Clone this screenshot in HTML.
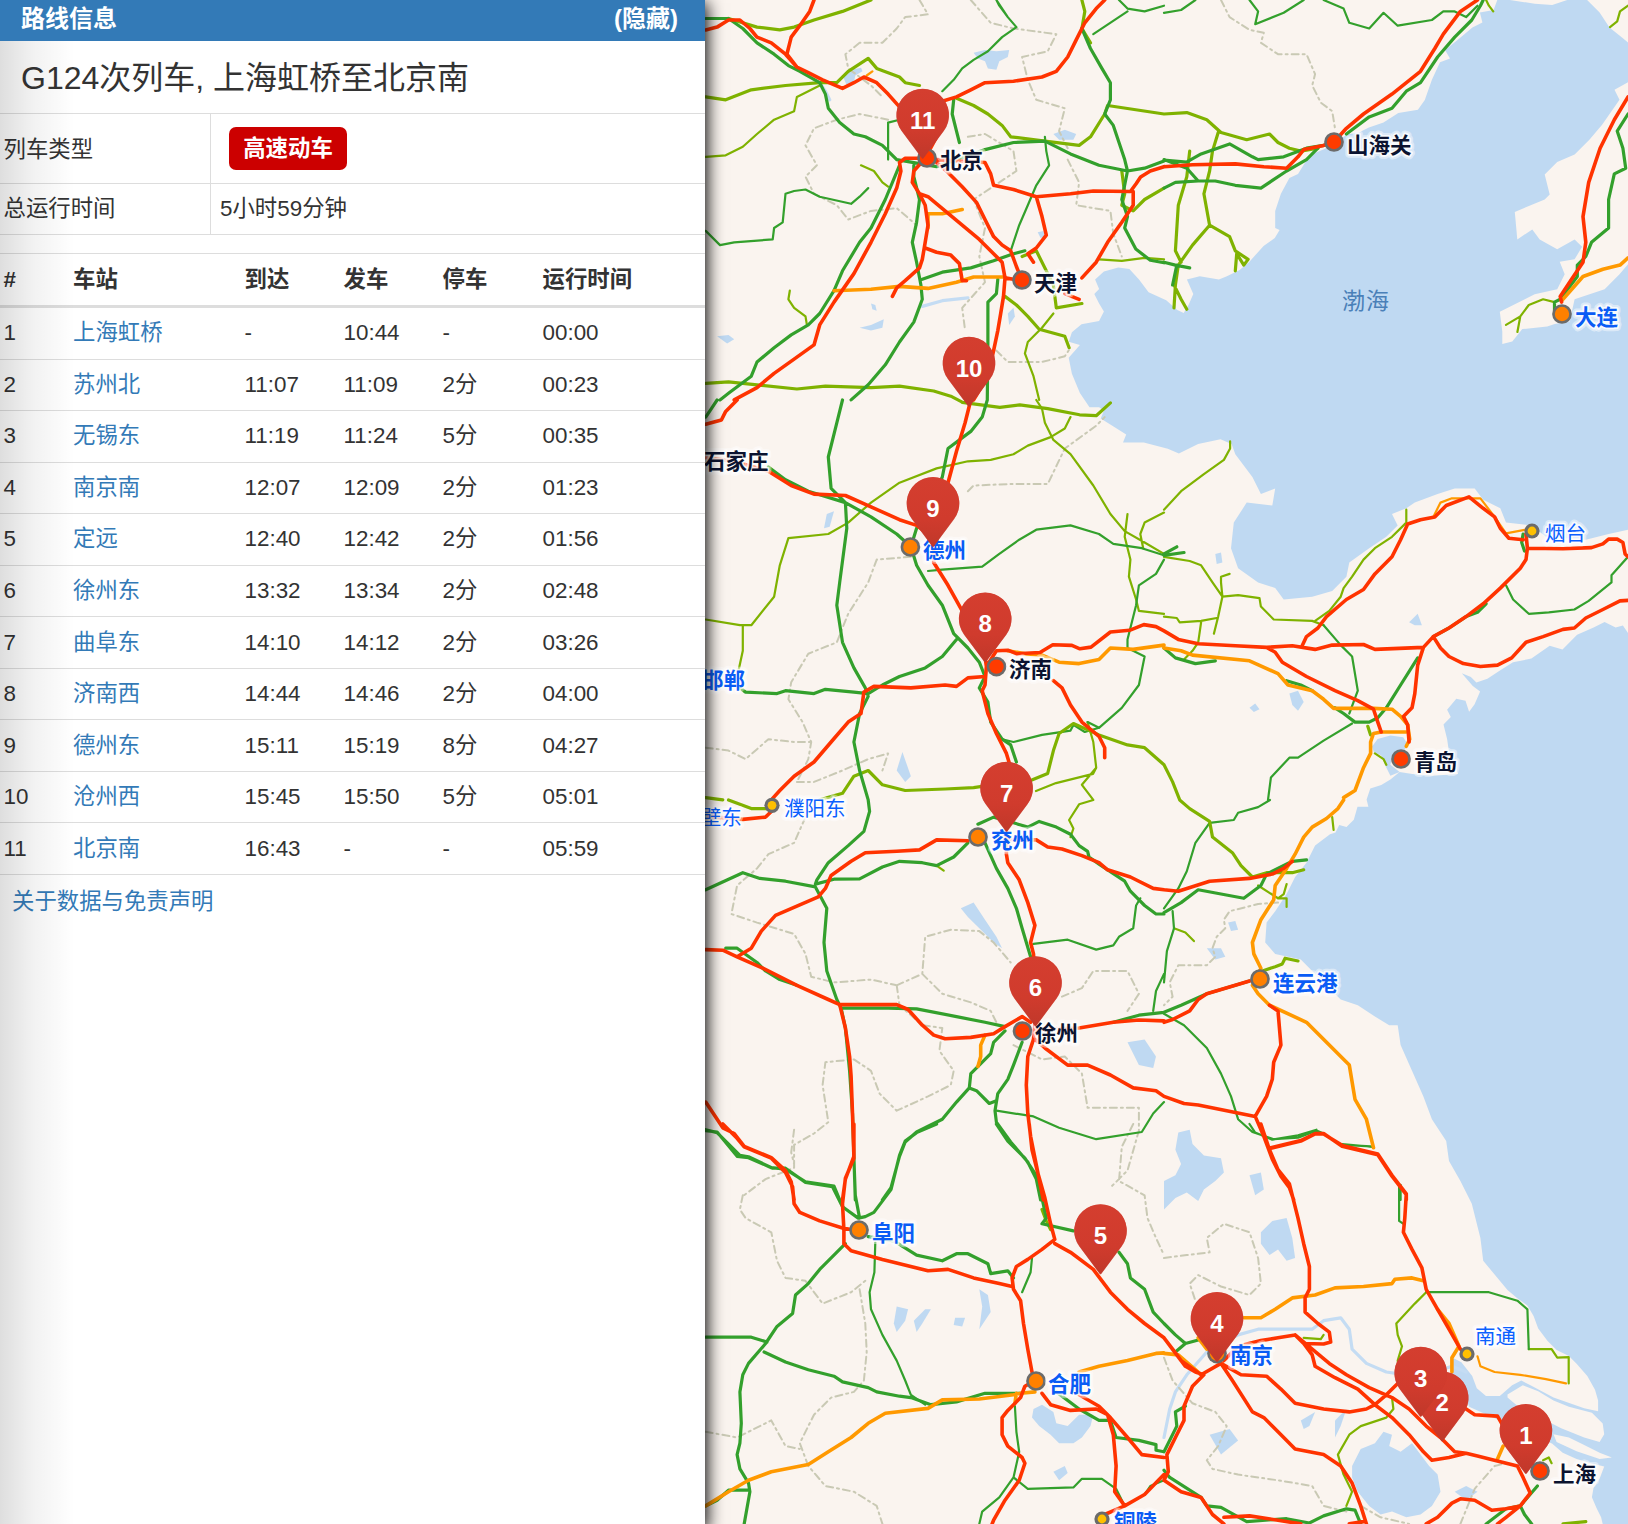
<!DOCTYPE html>
<html lang="zh-CN">
<head>
<meta charset="utf-8">
<title>G124次列车, 上海虹桥至北京南</title>
<style>
html,body{margin:0;padding:0;}
body{width:1628px;height:1524px;overflow:hidden;position:relative;background:#faf4ef;
  font-family:"Liberation Sans","Noto Sans CJK SC",sans-serif;color:#333;}
#map{position:absolute;left:0;top:0;width:1628px;height:1524px;}
#map svg{display:block;}
#panel{position:absolute;left:0;top:0;width:705px;height:1524px;background:#fff;
  box-shadow:0 5px 16px 2px #000;overflow:hidden;}
#panel:before{content:"";position:absolute;left:0;top:41px;width:75px;bottom:0;
  background:linear-gradient(to right,rgba(0,0,0,.13),rgba(0,0,0,.05) 45%,rgba(0,0,0,0));pointer-events:none;z-index:3;}
#hdr{position:absolute;left:0;top:0;width:705px;height:41px;background:#337ab7;color:#fff;
  font-weight:bold;font-size:24px;line-height:41px;}
#hdr .t{position:absolute;left:21px;top:-2px;}
#hdr .h{position:absolute;right:27px;top:-2px;}
#title{position:absolute;left:21px;top:54px;font-size:32px;line-height:48px;color:#333;white-space:nowrap;}
.ln{position:absolute;left:0;width:705px;height:1px;background:#ddd;}
.vl{position:absolute;left:210px;top:113px;width:1px;height:121px;background:#ddd;}
.c{position:absolute;font-size:22.4px;line-height:32px;white-space:nowrap;color:#333;}
.badge{position:absolute;left:229px;top:127px;width:118px;height:43px;border-radius:7px;background:#c00;color:#fff;
  font-weight:bold;font-size:22.4px;line-height:43px;text-align:center;}
table{position:absolute;left:0;top:253px;width:705px;border-collapse:collapse;table-layout:fixed;font-size:22.4px;}
th,td{padding:0 0 0 3.5px;text-align:left;white-space:nowrap;height:50.56px;line-height:32px;vertical-align:middle;border-top:1px solid #ddd;}
th{font-weight:bold;height:51px;border-bottom:3px solid #ddd;}
tr:last-child td{border-bottom:1px solid #ddd;}
a{color:#337ab7;text-decoration:none;}
#foot{position:absolute;left:12px;top:885.5px;font-size:22.4px;line-height:32px;}
</style>
</head>
<body>
<div id="map">
<svg width="1628" height="1524" viewBox="0 0 1628 1524">
<rect width="1628" height="1524" fill="#faf4ef"/>
<path d="M1497.3 0.0 L1493.6 10.0 L1479.9 12.5 L1482.4 22.4 L1472.4 27.4 L1457.5 39.9 L1445.0 49.9 L1450.0 58.6 L1440.0 62.3 L1431.9 79.8 L1424.8 100.0 L1417.9 109.7 L1398.3 112.9 L1383.5 122.6 L1368.9 127.4 L1358.9 132.5 L1347.0 134.5 L1335.0 142.5 L1324.5 149.1 L1309.9 155.0 L1304.8 163.0 L1298.0 173.9 L1289.4 178.1 L1280.9 193.8 L1275.2 210.9 L1275.2 228.0 L1279.6 230.0 L1274.8 238.0 L1263.6 246.0 L1249.2 261.9 L1239.6 269.9 L1226.9 276.3 L1218.9 279.5 L1199.7 276.3 L1186.9 279.5 L1193.3 293.9 L1188.5 305.1 L1183.7 313.0 L1177.3 309.9 L1166.2 300.3 L1148.6 292.3 L1139.0 279.5 L1129.4 269.1 L1118.3 267.5 L1103.9 271.5 L1095.1 279.5 L1099.1 289.1 L1094.3 293.9 L1099.1 303.5 L1103.9 311.4 L1099.1 321.0 L1081.5 324.2 L1071.9 332.2 L1068.7 341.8 L1079.9 345.0 L1068.7 357.8 L1071.9 373.7 L1079.9 392.9 L1089.5 407.3 L1099.1 407.3 L1103.9 410.5 L1100.7 418.5 L1113.5 426.4 L1126.2 434.4 L1123.0 442.4 L1143.8 442.4 L1167.8 448.8 L1178.9 453.6 L1198.1 444.0 L1220.5 439.2 L1231.6 444.0 L1235.3 454.2 L1252.4 477.0 L1260.9 494.1 L1275.2 488.4 L1272.3 505.5 L1246.7 502.6 L1233.8 522.6 L1231.0 548.2 L1238.1 568.2 L1258.1 582.4 L1275.2 588.1 L1283.7 599.5 L1312.2 596.7 L1332.2 591.0 L1346.4 576.7 L1349.3 562.5 L1369.2 548.2 L1386.3 536.8 L1397.7 525.4 L1392.0 514.0 L1406.3 508.3 L1414.8 502.6 L1437.6 494.1 L1454.7 488.4 L1474.7 488.4 L1483.2 499.8 L1500.3 508.3 L1506.0 522.6 L1531.7 525.4 L1545.9 536.8 L1585.8 539.7 L1608.6 534.0 L1628.0 529.7 L1628.0 264.3 L1619.5 274.3 L1604.6 289.2 L1589.6 294.2 L1574.6 299.2 L1569.7 321.6 L1554.7 324.1 L1547.2 326.6 L1522.3 329.1 L1512.3 341.6 L1502.3 344.1 L1502.3 331.6 L1499.8 311.7 L1524.8 299.2 L1534.7 294.2 L1557.2 289.2 L1564.7 274.3 L1559.7 261.8 L1574.6 259.3 L1582.1 246.8 L1574.6 239.4 L1557.2 249.3 L1539.7 239.4 L1532.3 229.4 L1517.3 239.4 L1514.8 211.9 L1544.7 199.5 L1549.7 194.5 L1544.7 174.5 L1557.2 162.1 L1574.6 154.6 L1589.6 139.6 L1602.1 124.7 L1619.5 99.7 L1614.5 89.8 L1628.0 82.3 L1628.0 42.4 L1622.0 37.4 L1609.5 27.4 L1599.6 12.5 L1587.1 0.0 L1567.2 0.0 L1552.2 5.0 L1534.7 3.7 L1509.8 0.0Z" fill="#bfd9f2"/>
<path d="M1628.0 632.9 L1622.9 625.6 L1615.6 627.5 L1604.6 622.0 L1593.6 627.5 L1577.1 634.8 L1562.5 649.4 L1549.7 645.8 L1531.4 658.6 L1513.0 662.2 L1498.4 671.4 L1487.4 678.7 L1476.4 682.4 L1470.9 676.9 L1461.8 673.2 L1472.8 686.0 L1480.1 691.5 L1474.6 704.3 L1469.1 711.7 L1465.5 700.7 L1456.3 698.8 L1447.1 709.8 L1450.8 717.1 L1443.5 724.5 L1447.1 739.1 L1449.0 751.9 L1458.1 773.9 L1432.5 775.7 L1412.4 773.9 L1399.6 772.1 L1390.4 779.4 L1381.3 784.9 L1370.3 788.5 L1366.6 799.5 L1368.4 806.8 L1357.5 806.8 L1353.8 819.7 L1346.5 827.0 L1339.2 825.1 L1335.5 832.5 L1330.0 834.3 L1315.1 845.6 L1306.5 862.7 L1295.1 877.0 L1286.6 894.1 L1275.2 911.2 L1266.6 922.6 L1265.2 942.5 L1275.2 953.9 L1300.8 959.6 L1323.6 982.4 L1340.7 999.5 L1357.8 1005.2 L1374.9 1016.6 L1389.2 1025.2 L1397.7 1025.2 L1400.6 1045.1 L1412.0 1070.8 L1423.4 1096.4 L1431.9 1119.2 L1446.2 1141.1 L1449.0 1161.1 L1460.4 1181.0 L1471.8 1203.8 L1480.4 1238.0 L1483.2 1260.8 L1507.5 1290.0 L1516.7 1297.7 L1527.4 1305.4 L1533.6 1316.1 L1538.2 1328.4 L1547.4 1340.7 L1556.6 1349.9 L1568.9 1356.0 L1576.6 1363.7 L1587.3 1376.0 L1595.0 1389.8 L1598.1 1400.5 L1598.1 1411.3 L1584.2 1408.2 L1553.5 1397.5 L1530.5 1385.2 L1521.3 1380.6 L1512.1 1385.2 L1499.8 1395.9 L1486.0 1395.9 L1476.8 1388.3 L1472.2 1376.0 L1461.4 1362.2 L1452.2 1357.6 L1450.7 1372.9 L1458.3 1385.2 L1466.0 1397.5 L1469.1 1406.7 L1499.8 1420.5 L1522.8 1431.3 L1552.0 1443.5 L1562.7 1452.7 L1576.6 1458.9 L1591.9 1463.5 L1604.2 1466.6 L1599.6 1478.8 L1593.5 1488.1 L1591.9 1497.3 L1596.5 1508.0 L1601.1 1517.2 L1602.7 1524.0 L1628.0 1524.0Z" fill="#bfd9f2"/>
<path d="M1507.5 1394.4 L1522.8 1385.2 L1538.2 1391.3 L1553.5 1400.5 L1568.9 1406.7 L1591.9 1412.8 L1602.7 1423.6 L1604.2 1434.3 L1599.6 1442.0 L1584.2 1437.4 L1561.2 1428.2 L1545.9 1420.5 L1530.5 1412.8 L1516.7 1405.2 L1507.5 1397.5Z" fill="#faf4ef"/>
<path d="M1553.5 1434.3 L1568.9 1437.4 L1584.2 1445.1 L1599.6 1452.7 L1611.9 1457.4 L1599.6 1458.9 L1576.6 1451.2 L1556.6 1442.0Z" fill="#faf4ef"/>
<path d="M973.6 52.7 L985.0 49.9 L996.4 51.3 L1009.2 49.9 L1007.8 57.0 L999.3 61.3 L996.4 69.8 L987.9 68.4 L985.0 61.3 L977.9 58.4Z" fill="#bfd9f2"/>
<path d="M842.5 75.5 L851.1 69.8 L861.0 67.8 L862.5 71.3 L855.3 75.5 L853.9 82.7 L846.8 85.5Z" fill="#bfd9f2"/>
<path d="M1053.4 134.0 L1064.8 129.7 L1076.2 134.0 L1073.4 139.7 L1059.1 139.7Z" fill="#bfd9f2"/>
<path d="M859.6 327.8 L871.0 324.9 L883.8 319.2 L882.4 327.8 L871.0 330.6Z" fill="#bfd9f2"/>
<path d="M717.1 336.3 L728.5 334.9 L734.2 339.2 L727.1 343.4Z" fill="#bfd9f2"/>
<path d="M1007.8 313.5 L1013.5 307.8 L1014.9 316.4 L1009.2 324.9Z" fill="#bfd9f2"/>
<path d="M871.0 303.5 L875.3 305.0 L876.7 310.7 L872.4 309.2Z" fill="#bfd9f2"/>
<path d="M1037.7 232.3 L1043.4 230.9 L1044.9 236.6 L1040.6 238.0Z" fill="#bfd9f2"/>
<path d="M826.8 514.0 L834.0 511.2 L829.7 526.8 L824.0 528.3Z" fill="#bfd9f2"/>
<path d="M896.7 770.5 L902.4 752.0 L910.9 776.2 L905.2 781.9Z" fill="#bfd9f2"/>
<path d="M1409.1 622.3 L1417.7 613.8 L1421.9 625.2 L1414.8 625.2Z" fill="#bfd9f2"/>
<path d="M1289.4 693.6 L1298.0 690.7 L1303.7 702.1 L1298.0 710.7 L1292.3 705.0Z" fill="#bfd9f2"/>
<path d="M1249.5 707.8 L1255.2 703.5 L1259.5 709.2 L1253.8 712.1Z" fill="#bfd9f2"/>
<path d="M1215.3 553.9 L1221.0 552.5 L1222.4 562.5 L1216.7 563.9Z" fill="#bfd9f2"/>
<path d="M960.8 908.3 L973.6 902.6 L985.0 919.7 L996.4 936.8 L1002.1 948.2 L993.6 942.5 L979.3 928.3 L967.9 916.9Z" fill="#bfd9f2"/>
<path d="M1127.5 1042.3 L1144.6 1039.4 L1156.0 1056.5 L1153.2 1067.9 L1138.9 1065.1Z" fill="#bfd9f2"/>
<path d="M1206.8 948.2 L1221.0 948.2 L1225.3 956.8 L1215.3 959.6Z" fill="#bfd9f2"/>
<path d="M1228.1 922.6 L1235.3 921.1 L1238.1 929.7 L1231.0 931.1Z" fill="#bfd9f2"/>
<path d="M1033.5 1409.0 L1042.0 1404.7 L1053.4 1411.9 L1056.3 1423.3 L1067.7 1426.1 L1079.1 1414.7 L1093.3 1414.7 L1090.5 1426.1 L1081.9 1437.5 L1073.4 1443.2 L1059.1 1443.2 L1050.6 1434.7 L1039.2 1426.1 L1032.0 1417.6Z" fill="#bfd9f2"/>
<path d="M896.7 1306.4 L908.1 1309.3 L905.2 1320.7 L896.7 1332.1 L893.8 1323.5Z" fill="#bfd9f2"/>
<path d="M913.8 1320.7 L925.2 1309.3 L930.9 1309.3 L922.3 1323.5 L916.6 1332.1Z" fill="#bfd9f2"/>
<path d="M955.1 1317.8 L965.1 1317.8 L962.2 1326.4 L953.7 1324.9Z" fill="#bfd9f2"/>
<path d="M979.3 1289.3 L987.9 1295.0 L990.7 1312.1 L979.3 1329.2 L982.2 1306.4Z" fill="#bfd9f2"/>
<path d="M1053.4 1471.7 L1064.8 1466.0 L1067.7 1473.1 L1059.1 1480.3Z" fill="#bfd9f2"/>
<path d="M1352.1 1466.0 L1360.7 1448.9 L1374.9 1443.2 L1383.5 1431.8 L1392.0 1434.7 L1389.2 1446.1 L1400.6 1451.8 L1412.0 1443.2 L1420.5 1454.6 L1429.1 1466.0 L1437.6 1474.6 L1440.5 1491.7 L1431.9 1505.9 L1420.5 1514.5 L1406.3 1517.3 L1392.0 1511.6 L1380.6 1514.5 L1369.2 1505.9 L1357.8 1491.7 L1352.1 1477.4Z" fill="#bfd9f2"/>
<path d="M1178.3 1132.6 L1189.7 1129.7 L1192.5 1144.0 L1203.9 1155.4 L1221.0 1158.2 L1223.9 1172.5 L1215.3 1181.0 L1203.9 1189.6 L1198.2 1201.0 L1186.8 1192.4 L1175.4 1198.1 L1164.0 1209.5 L1164.0 1181.0 L1175.4 1175.3 L1181.1 1163.9 L1175.4 1149.7Z" fill="#bfd9f2"/>
<path d="M1260.9 1232.3 L1272.3 1220.9 L1286.6 1218.1 L1292.3 1238.0 L1295.1 1258.0 L1286.6 1260.8 L1278.0 1249.4 L1269.5 1255.1 L1260.9 1243.7Z" fill="#bfd9f2"/>
<path d="M1249.5 1175.3 L1260.9 1172.5 L1263.8 1189.6 L1255.2 1195.3Z" fill="#bfd9f2"/>
<path d="M1209.6 1434.7 L1229.6 1429.0 L1238.1 1440.4 L1221.0 1454.6Z" fill="#bfd9f2"/>
<path d="M1300.8 1420.4 L1315.1 1411.9 L1309.4 1426.1 L1303.7 1429.0Z" fill="#bfd9f2"/>
<path d="M1335.0 1420.4 L1346.4 1409.0 L1340.7 1426.1 L1335.0 1437.5Z" fill="#bfd9f2"/>
<path d="M1454.7 1491.7 L1466.1 1486.0 L1477.5 1491.7 L1466.1 1500.2Z" fill="#bfd9f2"/>
<path d="M1372.1 746.4 L1377.6 739.1 L1390.4 735.5 L1403.2 737.3 L1407.8 744.6 L1403.2 751.9 L1392.2 755.6 L1390.4 764.7 L1399.6 772.1 L1390.4 775.7 L1384.9 764.7 L1381.3 755.6 L1373.9 751.9Z" fill="#bfd9f2"/>
<path d="M819.7 82.7 L825.4 91.2 L829.7 99.8 M922.3 306.4 L942.3 300.7 L967.9 297.8 M1164.0 1437.5 L1169.7 1409.0 L1175.4 1391.9 L1186.8 1374.8 L1206.8 1352.0 L1238.1 1334.9 L1258.1 1329.2 L1283.7 1329.2 L1312.2 1329.2 L1323.6 1320.7 L1340.7 1317.8 L1349.3 1329.2 L1352.1 1349.2 L1366.4 1363.4 L1386.3 1372.0 L1406.3 1374.8 L1434.8 1372.0 L1451.9 1366.3 L1466.1 1372.0" fill="none" stroke="#c4dcf3" stroke-width="3.2" stroke-linejoin="round" stroke-linecap="round"/>
<path d="M859.6 42.8 L845.4 54.2 L848.2 68.4 L859.6 77.0 L871.0 85.5 L882.4 96.9 M919.5 0.0 L928.0 14.3 L905.2 17.1 L896.7 28.5 L882.4 42.8 L859.6 42.8 M888.1 119.7 L859.6 114.0 L836.8 119.7 L814.0 128.3 L805.5 145.4 L816.9 165.3 L805.5 176.7 L814.0 193.8 L836.8 205.2 L848.2 219.5 L871.0 210.9 L896.7 208.1 L916.6 225.2 M970.8 0.0 L990.7 22.8 L1013.5 28.5 L1056.3 34.2 L1047.7 51.3 L1022.1 57.0 L1027.8 79.8 L1036.3 99.8 L1064.8 108.3 L1059.1 131.1 L1067.7 148.2 M967.9 136.8 L985.0 134.0 L1013.5 151.1 L1016.4 171.0 L990.7 188.1 L973.6 199.5 L985.0 228.0 L979.3 256.5 L985.0 282.2 L962.2 307.8 L965.1 330.6 M1067.7 159.6 L1079.1 182.4 L1076.2 205.2 L1110.4 210.9 L1113.3 233.7 L1121.8 256.5 M996.4 350.6 L1007.8 362.0 L1042.0 362.0 L1064.8 356.3 L1070.5 347.7 M1221.0 0.0 L1229.6 17.1 L1249.5 29.9 L1263.8 32.8 L1260.9 42.8 L1278.0 54.2 L1306.5 54.2 L1315.1 74.1 L1312.2 85.5 L1320.8 102.6 L1332.2 111.2 L1335.0 128.3 M967.9 491.2 L973.6 485.5 L1007.8 484.1 L1047.7 484.1 L1064.8 448.5 L1096.2 425.7 L1104.7 417.1 M910.9 556.8 L876.7 559.6 L868.2 582.4 L848.2 613.8 L836.8 642.3 L808.3 653.7 L791.2 682.2 L788.4 699.3 L802.6 722.1 L811.2 742.0 L808.3 759.1 L796.9 781.9 M705.7 747.7 L728.5 750.6 L745.6 759.1 L768.4 739.2 L794.1 742.0 L811.2 742.0 M796.9 781.9 L814.0 781.9 L842.5 770.5 L868.2 759.1 L888.1 753.4 L882.4 770.5 M805.5 817.1 L794.1 842.8 L768.4 854.2 L757.0 868.4 L737.1 885.5 L731.4 914.0 L757.0 922.6 L794.1 934.0 L805.5 953.9 L811.2 976.7 L834.0 982.4 L871.0 979.6 L896.7 985.3 M896.7 985.3 L922.3 973.9 L925.2 936.8 L950.8 929.7 L979.3 931.1 L993.6 942.5 L1010.7 962.5 M896.7 985.3 L899.5 1005.2 L922.3 1025.2 L942.3 1028.0 L939.4 1050.8 L953.7 1070.8 L950.8 1085.0 L928.0 1096.4 L896.7 1110.7 L879.6 1093.6 L871.0 1070.8 L853.9 1059.4 L825.4 1062.2 L822.6 1085.0 L828.3 1122.1 L814.0 1133.5 L794.1 1144.9 L794.1 1167.7 L765.6 1179.1 L742.8 1196.2 M922.3 973.9 L942.3 993.8 L970.8 1002.4 L990.7 1010.9 L996.4 1022.3 M1062.0 996.7 L1081.9 988.1 L1093.3 971.0 L1127.5 971.0 L1138.9 993.8 L1127.5 1010.9 M1013.5 1045.1 L1042.0 1059.4 L1064.8 1056.5 L1081.9 1073.6 L1087.6 1107.8 L1138.9 1107.8 L1138.9 1130.6 L1127.5 1170.5 L1110.4 1187.6 M1278.0 902.6 L1258.1 904.0 L1229.6 911.2 L1223.9 919.7 L1225.3 928.3 L1216.7 936.8 L1212.5 948.2 L1215.3 956.8 L1206.8 965.3 L1178.3 965.3 L1169.7 982.4 L1172.6 996.7 L1164.0 1005.2 M742.8 1195.3 L739.9 1209.5 L745.6 1218.1 L771.3 1232.3 L777.0 1260.8 L785.5 1277.9 L805.5 1280.8 L822.6 1303.6 L851.1 1292.2 L865.3 1280.8 M859.6 1289.3 L865.3 1323.5 L866.7 1352.0 L863.9 1380.5 L853.9 1391.9 L831.1 1397.6 L814.0 1414.7 L799.8 1443.2 L808.3 1466.0 L825.4 1486.0 L853.9 1491.7 L876.7 1505.9 L882.4 1523.9 M705.7 1431.8 L737.1 1437.5 L771.3 1420.4 L785.5 1446.1 L799.8 1448.9 M794.1 1129.7 L791.2 1152.5 L794.1 1163.9 M1133.2 1124.0 L1121.8 1146.8 L1119.0 1181.0 L1144.6 1195.3 L1147.5 1218.1 L1156.0 1238.0 L1164.0 1255.1 M1164.0 1258.0 L1186.8 1255.1 L1209.6 1252.3 L1206.8 1238.0 L1223.9 1223.8 L1249.5 1232.3 L1258.1 1258.0 L1260.9 1283.6 L1249.5 1295.0 L1221.0 1286.5 L1198.2 1275.1 L1189.7 1283.6 L1195.4 1300.7 M1164.0 1357.7 L1172.6 1380.5 L1192.5 1403.3 L1215.3 1411.9 L1226.7 1426.1 L1218.2 1446.1 L1206.8 1460.3 L1212.5 1468.9 L1238.1 1474.6 L1278.0 1480.3 L1312.2 1486.0 L1323.6 1505.9 L1346.4 1511.6 M1360.7 1505.9 L1380.6 1517.3 L1409.1 1523.9 M1460.4 1523.9 L1474.7 1488.8 L1494.6 1466.0 L1506.0 1463.2" fill="none" stroke="#c9c9b4" stroke-width="2" stroke-linejoin="round" stroke-linecap="round" stroke-dasharray="7 4 2 4"/>
<path d="M705.7 156.8 L725.7 155.3 L742.8 146.8 L757.0 134.0 L774.1 119.7 L794.1 111.2 L796.9 96.9 L819.7 85.5 M1164.0 259.4 L1144.6 257.9 L1121.8 260.8 L1099.0 259.4 M1053.4 313.5 L1042.0 327.8 L1027.8 342.0 L1024.9 353.4 L1033.5 376.2 L1039.2 399.9 M789.8 290.7 L788.4 299.3 L794.1 307.8 L805.5 316.4 L806.9 324.9 M861.0 165.3 L873.9 171.0 L882.4 182.4 L888.1 186.7 M1486.1 0.0 L1488.9 5.7 L1493.2 11.4 M1554.5 302.1 L1543.1 299.3 L1528.8 305.0 L1520.3 316.4 L1506.0 324.9 M1520.3 316.4 L1517.4 332.0 M1628.0 5.7 L1620.0 11.4 L1617.2 21.4 L1610.0 27.1 M1036.3 400.0 L1042.0 408.6 L1044.9 422.8 L1053.4 439.9 L1070.5 454.2 L1093.3 485.5 L1110.4 514.0 L1124.7 531.1 L1144.6 542.5 L1164.0 553.9 M1070.5 417.1 L1064.8 428.5 L1050.6 437.1 L1027.8 445.6 L1013.5 454.2 L990.7 459.9 L967.9 461.3 L936.6 468.4 L899.5 482.7 L871.0 502.6 L848.2 522.6 L828.3 534.0 L788.4 538.2 L779.8 565.3 L774.1 596.7 L751.3 625.2 L739.9 625.2 L705.7 619.5 M742.8 625.2 L742.8 650.8 L738.5 670.8 M1127.5 514.0 L1124.7 536.8 L1130.4 559.6 L1128.9 576.7 L1136.1 599.5 L1138.9 610.9 L1164.0 613.8 M1164.0 512.6 L1144.6 522.6 L1140.3 534.0 L1143.2 548.2 M1036.0 791.0 L1056.0 783.1 L1093.0 773.9 L1096.2 767.7 M1087.6 722.1 L1093.3 742.0 L1096.2 767.7 L1081.9 784.8 L1093.3 799.9 M1164.0 509.7 L1181.1 491.2 L1203.9 474.1 L1223.9 459.9 L1230.1 448.5 L1230.1 441.3 M1164.0 556.8 L1189.7 561.0 L1201.1 565.3 L1212.5 582.4 L1222.4 596.7 L1238.1 595.2 L1259.5 598.1 L1260.9 606.6 L1273.7 619.5 L1312.2 620.9 L1323.6 625.2 M1229.6 573.9 L1221.0 576.7 L1221.0 582.4 L1222.4 596.7 L1218.2 616.6 L1213.9 633.7 M1164.0 616.6 L1176.8 618.0 L1179.7 622.3 L1201.1 620.9 L1216.7 618.0 M1201.1 622.3 L1198.2 642.3 L1192.5 650.8 L1184.0 659.4 M1406.3 509.7 L1406.3 522.6 L1392.0 536.8 L1374.9 548.2 L1363.5 559.6 L1352.1 576.7 L1343.6 588.1 L1340.7 596.7 L1329.3 610.9 L1315.1 620.9 M1374.9 753.4 L1383.5 759.1 L1386.3 764.8 M936.6 865.6 L943.7 870.7 M1093.3 800.0 L1079.1 804.3 L1069.1 820.0 L1073.4 828.5 L1070.5 837.1 M1174.0 928.3 L1185.4 932.5 L1193.9 941.1 M1258.1 885.5 L1278.0 898.3 L1286.6 898.3 L1286.6 906.9 M1278.0 898.3 L1283.7 894.1 L1286.6 884.1 M1332.2 817.1 L1333.6 829.9 M1426.2 1292.2 L1414.8 1303.6 L1396.3 1323.5 L1397.7 1334.9 L1402.0 1346.3 L1397.7 1360.6 L1400.6 1380.5 M1528.8 1349.2 L1551.6 1349.2 L1557.3 1357.7 L1568.7 1357.1 L1568.7 1383.4 M1392.0 1397.6 L1393.4 1409.0 L1386.3 1417.6 L1360.7 1426.1 L1349.3 1434.7 L1337.9 1454.6 L1343.6 1474.6 L1352.1 1491.7 L1346.4 1505.9 M1303.7 1337.8 L1320.8 1339.2 L1323.6 1334.9 M1543.1 1460.3 L1548.8 1457.5 L1551.6 1463.2" fill="none" stroke="#7fb200" stroke-width="2.2" stroke-linejoin="round" stroke-linecap="round"/>
<path d="M1044.9 136.8 L1046.3 151.1 L1049.1 165.3 L1036.3 185.3 L1027.8 205.2 L1019.2 225.2 L1010.7 250.8 M942.3 91.2 L953.7 79.8 L962.2 68.4 L973.6 59.9 L987.9 51.3 L1002.1 37.1 L1016.4 27.1 L1007.8 17.1 L999.3 5.7 L996.4 0.0 M888.1 159.6 L888.1 122.6 L899.5 119.7 M705.7 230.9 L720.0 245.1 L734.2 242.3 L772.7 239.4 L774.1 228.0 L782.7 222.3 L785.5 193.8 L794.1 191.0 L805.5 189.5 L819.7 196.7 L851.1 203.8 L859.6 196.7 L868.2 188.1 M996.4 0.0 L1007.8 17.1 L1016.4 27.1 L1002.1 37.1 L987.9 51.3 L973.6 59.9 L962.2 68.4 L953.7 79.8 L942.3 91.2 M1164.0 5.7 L1144.6 11.4 L1127.5 8.6 L1119.0 0.0 M1093.3 34.2 L1127.5 11.4 M1164.0 12.8 L1181.1 10.0 L1195.4 0.0 M1249.5 0.0 L1258.1 11.4 L1255.2 24.2 L1283.7 12.8 L1303.7 0.0 M1323.6 0.0 L1343.6 8.6 L1349.3 22.8 L1369.2 28.5 L1383.5 12.8 L1397.7 25.7 L1431.9 20.0 L1443.3 11.4 L1454.7 11.4 L1466.1 17.1 L1477.5 5.7 M928.0 571.0 L942.3 569.6 L982.2 566.7 L999.3 553.9 L1019.2 539.7 L1036.3 529.7 L1070.5 525.4 L1099.0 534.0 L1113.3 543.9 L1141.8 548.2 L1164.0 555.3 M1164.0 559.6 L1156.0 573.9 L1138.9 585.3 L1136.1 605.2 L1127.5 639.4 L1127.5 648.0 L1144.6 656.5 L1138.9 685.0 L1121.8 707.8 L1099.0 727.8 L1087.6 722.1 M1002.1 739.2 L1013.5 742.0 L1042.0 734.9 L1070.5 730.6 L1073.4 724.9 L1084.8 732.0 L1099.0 727.8 M1352.1 723.5 L1323.6 740.6 L1298.0 757.7 L1289.4 757.7 L1270.9 777.6 L1268.0 799.9 M1323.6 625.2 L1340.7 645.1 L1352.1 656.5 L1357.8 690.7 L1349.3 713.5 M1506.0 585.3 L1513.1 599.5 L1528.8 613.8 L1548.8 612.3 L1574.4 609.5 L1588.7 600.9 L1611.5 582.4 L1611.5 575.3 L1628.0 556.8 M1164.0 973.9 L1156.0 991.0 L1153.2 1010.9 M1033.5 943.9 L1067.7 939.7 L1096.2 949.6 L1113.3 945.4 L1119.0 936.8 L1133.2 928.3 L1136.1 905.5 L1140.3 898.3 M996.4 1110.7 L1033.5 1116.4 L1059.1 1127.8 L1096.2 1139.2 L1141.8 1132.0 L1153.2 1113.5 L1164.0 1102.1 M1270.0 800.0 L1258.1 807.1 L1238.1 812.8 L1233.8 820.0 L1209.6 822.8 L1195.4 842.8 L1186.8 871.3 L1178.3 888.4 L1164.0 908.3 M1172.6 911.2 L1174.0 928.3 L1166.9 951.1 L1164.0 982.4 M1164.0 1013.8 L1184.0 1025.2 L1206.8 1048.0 L1221.0 1073.6 L1231.0 1096.4 L1238.1 1119.2 L1252.4 1132.0 L1273.7 1139.2 L1298.0 1137.7 L1316.5 1130.6 L1323.6 1133.5 M1343.6 1144.9 L1370.6 1146.3 M1400.6 1199.9 L1400.6 1184.8 M875.3 1242.3 L874.4 1272.2 L869.6 1292.2 L871.0 1309.3 L882.4 1334.9 L896.7 1360.6 L905.2 1380.5 L910.9 1394.8 L925.2 1404.7 M1032.0 1258.0 L1030.6 1272.2 L1022.1 1292.2 M1014.9 1406.2 L1016.4 1431.8 L1019.2 1451.8 L1013.5 1477.4 L1027.8 1488.8 L1073.4 1487.4 L1081.9 1478.8 L1101.9 1478.8 L1116.1 1488.8 L1124.7 1505.9 M1013.5 1477.4 L999.3 1497.4 L982.2 1511.6 L979.3 1523.9 M1164.0 1480.3 L1150.3 1486.0 L1144.6 1494.5 M1399.1 1186.7 L1399.1 1220.9 L1403.4 1223.8 M1249.5 1124.0 L1255.2 1132.6 L1272.3 1139.7 L1298.0 1135.4 L1316.5 1129.7 M1342.1 1144.0 L1372.1 1146.8 M1426.2 1292.2 L1488.9 1292.2 L1517.4 1300.7 L1527.4 1309.3 L1528.8 1349.2" fill="none" stroke="#33a02c" stroke-width="2.2" stroke-linejoin="round" stroke-linecap="round"/>
<path d="M866.7 75.5 L872.4 71.3 M1526.0 529.7 L1506.0 533.4 L1494.6 516.9 L1480.4 498.3 L1451.9 498.3 L1440.5 502.6 L1433.3 516.9 M1477.5 1356.3 L1480.4 1366.3 L1494.6 1372.0 L1520.3 1374.8 L1545.9 1379.1 L1565.9 1383.4" fill="none" stroke="#ff9900" stroke-width="2.2" stroke-linejoin="round" stroke-linecap="round"/>
<path d="M705.7 96.9 L725.7 99.8 L751.3 89.8 L785.5 85.5 L819.7 82.7 L836.8 82.7 L848.2 71.3 L868.2 58.4 L876.7 68.4 L899.5 77.0 L905.2 82.7 L919.5 85.5 M728.5 18.5 L757.0 27.1 L779.8 29.9 L794.1 27.1 L814.0 20.0 L842.5 11.4 L871.0 0.0 M705.7 383.3 L728.5 381.9 L757.0 384.8 L796.9 389.0 L825.4 386.2 L871.0 387.6 L899.5 386.2 L933.7 391.0 L950.8 396.2 L962.2 402.2 M956.5 98.3 L973.6 105.5 L987.9 114.0 L1002.1 125.4 L1010.7 136.8 L1044.9 141.1 L1079.1 145.4 L1090.5 136.8 L1104.7 114.0 L1107.6 105.5 L1164.0 114.0 M1005.0 296.4 L1016.4 305.0 L1027.8 316.4 L1039.2 329.2 L1064.8 336.3 L1069.1 347.7 M1081.9 0.0 L1084.8 11.4 L1081.9 28.5 L1090.5 42.8 M1121.8 171.0 L1124.7 193.8 L1121.8 205.2 L1133.2 210.9 L1144.6 199.5 L1164.0 188.1 M1022.1 256.5 L1036.3 250.8 L1053.4 285.0 L1056.3 307.8 L1081.9 303.5 M1164.0 114.0 L1186.8 112.6 L1206.8 119.7 L1221.0 132.5 L1246.7 139.7 L1269.5 134.0 L1278.0 142.5 L1289.4 148.2 L1300.8 151.1 L1317.9 148.2 M1218.2 132.5 L1212.5 151.1 L1209.6 171.0 L1203.9 193.8 L1209.6 225.2 L1229.6 236.6 L1235.3 250.8 L1248.1 259.4 L1243.8 265.1 L1236.7 253.7 L1235.3 270.8 M1209.6 225.2 L1192.5 245.1 L1178.3 265.1 L1175.4 285.0 L1174.0 307.8 M1189.7 151.1 L1186.8 176.7 L1178.3 205.2 L1175.4 250.8 L1181.1 262.2 M1174.0 285.0 L1181.1 299.3 L1186.8 309.2 M962.2 402.3 L999.8 407.4 L1019.8 404.8 L1047.7 408.6 L1079.6 414.8 L1096.2 415.7 L1110.4 402.9 M1164.0 764.8 L1144.6 747.7 L1127.5 744.9 L1099.0 734.9 L1073.4 723.5 L1059.1 733.5 L1053.4 750.6 L1047.7 773.4 L1030.6 780.5 L1002.1 783.3 L973.6 787.6 L945.1 789.0 L905.2 790.5 L882.4 784.8 L868.2 770.5 L853.9 776.2 L842.5 793.3 L819.7 799.9 M705.7 797.6 L722.8 799.9 M1164.0 764.8 L1172.6 781.9 L1179.7 799.9 M1367.8 726.3 L1370.6 734.9 M728.5 800.0 L751.3 808.6 L771.3 808.6 M1179.7 800.0 L1189.7 808.6 L1209.6 821.4 L1212.5 837.1 L1232.4 852.7 L1241.0 865.6 L1252.4 877.0 L1266.6 872.7 M1266.6 872.7 L1292.3 872.7 L1303.7 869.8 M1262.3 971.0 L1275.2 966.7 L1282.3 963.9 L1285.1 958.2 L1298.0 961.0 M1042.0 1209.5 L1046.3 1220.9 L1050.6 1229.5 M1563.0 1523.9 L1585.8 1521.6" fill="none" stroke="#7fb200" stroke-width="3.2" stroke-linejoin="round" stroke-linecap="round"/>
<path d="M705.7 18.5 L728.5 18.5 L742.8 28.5 L757.0 42.8 L774.1 54.2 L788.4 65.6 L799.8 71.3 L819.7 82.7 L825.4 94.1 L828.3 108.3 L839.7 122.6 L853.9 134.0 L865.3 136.8 L882.4 145.4 L896.7 159.6 M899.5 165.3 L885.3 199.5 L871.0 228.0 L859.6 242.3 L842.5 270.8 L834.0 290.7 L819.7 313.5 L808.3 324.9 L791.2 334.9 L774.1 347.7 L757.0 362.0 L751.3 376.2 L728.5 393.3 L720.0 399.9 M913.8 165.3 L913.8 176.7 L919.5 199.5 L916.6 222.3 L912.3 242.3 L916.6 262.2 L920.9 285.0 L922.3 299.3 L913.8 322.1 L899.5 342.0 L885.3 364.8 L868.2 384.8 L851.1 399.9 M922.3 279.3 L942.3 272.2 L970.8 267.9 L993.6 260.8 L1013.5 253.7 L1024.9 250.8 M985.0 149.6 L1013.5 142.5 L1044.9 141.1 L1070.5 153.9 L1099.0 165.3 L1127.5 171.0 L1144.6 168.2 L1164.0 161.0 M953.7 99.8 L952.2 114.0 L956.5 131.1 L959.4 142.5 M1081.9 28.5 L1090.5 48.5 L1101.9 68.4 L1110.4 82.7 L1110.4 99.8 L1104.7 114.0 L1113.3 125.4 L1119.0 142.5 L1124.7 159.6 L1127.5 171.0 L1121.8 199.5 L1127.5 216.6 L1124.7 228.0 L1135.8 249.1 L1150.3 260.2 L1164.0 262.8 M987.3 399.9 L987.9 342.0 L987.9 302.1 L996.4 293.6 L997.8 279.3 M896.7 159.6 L936.6 166.7 L985.0 149.6 M1334.2 141.7 L1323.6 145.4 L1306.5 148.2 L1283.7 156.8 L1258.1 159.6 L1252.4 156.8 L1229.6 143.9 L1201.1 153.9 L1186.5 162.2 L1164.0 160.2 M1164.0 159.6 L1186.8 168.2 L1198.2 181.0 L1215.3 181.0 L1235.3 185.3 L1260.9 188.1 L1286.6 171.0 L1306.5 159.6 L1317.9 148.2 M1346.4 134.0 L1369.2 116.9 L1392.0 108.3 L1406.3 91.2 L1420.5 82.7 L1437.6 57.0 L1454.7 37.1 L1471.8 20.0 L1480.4 5.7 L1483.2 0.0 M1164.0 188.1 L1175.4 182.4 L1198.2 181.0 M1628.0 114.0 L1617.2 131.1 L1622.9 148.2 L1625.7 168.2 L1614.3 173.9 L1608.6 199.5 L1608.6 228.0 L1591.5 242.3 L1585.8 256.5 L1577.3 265.1 L1577.3 276.5 L1560.2 299.3 L1554.5 302.1 L1554.5 310.7 M1164.0 262.2 L1175.4 265.1 L1189.7 267.9 M1176.8 265.1 L1172.6 285.0 M842.5 400.0 L836.8 422.8 L828.3 457.0 L831.1 488.4 L845.4 502.6 L846.8 528.3 L839.7 582.4 L836.8 605.2 L842.5 642.3 L853.9 667.9 L865.3 687.9 L868.2 696.4 L859.6 713.5 L853.9 742.0 L859.6 770.5 L868.2 799.9 M768.4 467.0 L785.5 479.8 L808.3 491.2 L845.4 502.6 L871.0 516.9 L896.7 534.0 L910.9 546.8 L916.6 565.3 L928.0 585.3 L942.3 605.2 L953.7 633.7 L967.9 648.0 L979.3 662.2 L985.0 676.5 L979.3 687.9 L987.9 702.1 L990.7 722.1 L1002.1 739.2 L1010.7 744.9 L1016.4 762.0 M987.3 400.0 L982.2 417.1 L970.8 431.4 L948.0 448.5 L942.3 477.0 L928.0 508.3 L916.6 528.3 L910.9 546.8 M956.5 639.4 L942.3 656.5 L925.2 667.9 L899.5 676.5 L882.4 685.0 L868.2 693.6 L853.9 692.1 L825.4 689.3 L814.0 693.6 L785.5 690.7 L777.0 693.6 L745.6 692.1 L739.9 687.9 M705.7 417.1 L711.4 408.6 L717.1 400.0 M1417.7 657.9 L1400.6 685.0 L1386.3 707.8 L1377.8 717.8 L1369.2 722.1 L1355.0 722.1 L1343.6 713.5 L1335.0 707.8 M1164.0 648.0 L1175.4 657.9 L1195.4 663.6 L1215.3 660.8 M1164.0 553.9 L1176.8 546.8 M1164.0 555.3 L1184.0 552.5 M1286.6 680.7 L1300.8 685.0 L1312.2 690.7 M1433.3 636.6 L1449.0 628.0 L1466.1 616.6 L1477.5 612.3 L1486.1 603.8 M1523.1 534.0 L1521.7 542.5 L1524.5 551.1 M868.2 800.0 L869.6 811.4 L863.9 831.4 L848.2 845.6 L828.3 862.7 L816.9 879.8 L815.4 884.1 M705.7 889.8 L742.8 872.7 L759.9 878.4 L785.5 881.2 L815.4 886.9 L826.8 908.3 L824.0 942.5 L826.8 971.0 L836.8 999.5 L841.1 1008.1 M815.4 884.1 L834.0 879.2 L859.6 878.9 L882.4 867.0 L899.5 861.3 L922.3 862.7 L936.6 865.6 L953.7 857.0 L967.9 842.8 M841.1 1008.1 L888.1 1008.1 L916.6 1008.9 L956.5 1016.6 L985.0 1022.3 L1005.0 1026.6 M977.9 824.2 L993.6 817.1 L1013.5 822.8 L1027.8 827.1 L1039.2 821.4 L1056.3 827.1 L1070.5 834.2 L1079.1 845.6 L1087.6 851.3 L1089.0 857.0 L1099.0 864.1 L1124.7 881.2 L1130.4 891.2 L1144.6 905.5 L1156.0 914.0 L1164.0 914.0 M985.0 842.8 L996.4 868.4 L1007.8 888.4 L1016.4 908.3 L1022.1 928.3 L1030.6 956.8 M725.7 948.2 L737.1 948.2 L757.0 962.5 L765.6 971.0 L779.8 979.6 L796.9 985.3 M1022.1 1042.3 L1013.5 1065.1 L1007.8 1079.3 L997.8 1093.6 L995.0 1110.7 L996.4 1122.1 L1010.7 1142.0 L1027.8 1162.0 L1036.3 1179.1 L1040.6 1199.9 M1005.0 1030.9 L993.6 1042.3 L990.7 1053.7 L985.0 1059.4 L970.8 1073.6 L969.3 1087.9 L956.5 1102.1 L942.3 1119.2 L916.6 1132.0 L905.2 1142.0 L899.5 1156.3 L891.0 1187.6 L882.4 1199.9 M969.3 1087.9 L976.5 1090.7 L989.3 1103.5 L996.4 1100.7 M705.7 1130.6 L717.1 1132.0 L737.1 1156.3 L748.5 1157.7 L771.3 1167.7 L785.5 1169.1 L805.5 1181.9 L834.0 1186.2 L839.7 1199.9 M841.1 1008.1 L845.4 1028.0 L849.6 1070.8 L852.5 1113.5 L853.9 1156.3 L855.3 1199.9 M1164.0 1012.3 L1138.9 1015.2 L1113.3 1022.3 M1164.0 912.6 L1181.1 902.6 L1198.2 889.8 L1243.8 898.3 L1260.9 885.5 L1266.6 874.1 L1292.3 861.3 L1306.5 859.9 M1249.5 981.0 L1206.8 993.8 L1181.1 1005.2 L1164.0 1012.3 M705.7 1129.7 L717.1 1132.6 L739.9 1155.4 L748.5 1156.8 L772.7 1168.2 L785.5 1168.2 L805.5 1182.4 L832.5 1186.7 L842.5 1206.7 L858.2 1218.1 M853.9 1158.2 L855.3 1195.3 L859.6 1218.1 M936.6 1124.0 L916.6 1132.6 L905.2 1141.1 L899.5 1155.4 L891.0 1189.6 L873.9 1212.4 L865.3 1216.6 L858.2 1218.1 M996.4 1124.0 L1007.8 1141.1 L1024.9 1158.2 L1036.3 1175.3 L1042.0 1198.1 L1046.3 1218.1 L1042.0 1223.8 L1073.4 1230.9 M845.4 1243.7 L819.7 1269.4 L808.3 1283.6 L795.5 1295.0 L792.6 1313.5 L777.0 1326.4 L765.6 1343.5 L748.5 1363.4 L742.8 1374.8 L739.9 1391.9 L741.3 1423.3 L739.9 1443.2 L737.1 1454.6 L739.9 1468.9 L748.5 1483.1 L749.9 1491.7 L744.2 1523.9 M705.7 1337.2 L751.3 1337.2 L767.0 1342.0 M764.1 1352.0 L785.5 1362.0 L808.3 1369.7 L834.0 1376.2 L842.5 1381.9 L868.2 1387.6 L876.7 1391.9 L899.5 1396.2 L910.9 1397.6 L930.9 1404.7 M868.2 1236.6 L893.8 1240.9 L916.6 1255.1 L942.3 1260.8 L956.5 1253.7 L967.9 1253.7 L987.9 1263.7 L990.7 1273.6 L1007.8 1270.8 L1013.5 1277.9 M1164.0 1323.5 L1153.2 1312.1 L1144.6 1289.3 L1130.4 1277.9 L1127.5 1263.7 L1119.0 1252.3 M930.9 1404.7 L956.5 1401.9 L985.0 1393.3 L1020.6 1393.3 M1056.3 1391.9 L1079.1 1409.0 L1099.0 1420.4 L1110.4 1420.4 L1116.1 1437.5 L1138.9 1440.4 L1156.0 1444.6 L1156.0 1450.3 L1164.0 1451.8 M705.7 1505.9 L717.1 1500.2 L728.5 1490.2 L748.5 1490.2 M1164.0 1323.5 L1175.4 1334.9 L1185.4 1343.5 L1201.1 1339.2 L1221.0 1340.6 M1185.4 1343.5 L1175.4 1352.0 M1164.0 1451.8 L1176.8 1426.1 L1175.4 1411.9 L1185.4 1406.2 M1164.0 1470.3 L1169.7 1477.4 L1201.1 1497.4 L1206.8 1505.9 L1221.0 1507.3 L1246.7 1521.6 L1286.6 1518.7 L1309.4 1523.0 L1323.6 1515.9 L1346.4 1508.8 L1355.0 1510.2 L1360.7 1523.9 M1486.1 1523.9 L1506.0 1508.8 L1520.3 1505.9 L1537.4 1486.0 M1520.3 1505.9 L1524.5 1514.5 L1531.7 1523.9" fill="none" stroke="#33a02c" stroke-width="3.2" stroke-linejoin="round" stroke-linecap="round"/>
<path d="M834.0 290.7 L871.0 289.3 L899.5 286.4 L928.0 288.4 L956.5 282.2 L973.6 277.0 L1005.0 277.0 M962.2 209.5 L942.3 213.8 L928.0 213.8 L928.0 228.0 M1561.6 300.7 L1583.0 276.5 L1602.9 269.3 L1620.0 265.1 L1628.0 257.9 M1007.8 650.8 L1024.9 653.7 L1042.0 655.1 L1059.1 662.2 L1079.1 663.6 L1099.0 659.4 L1110.4 648.0 L1133.2 649.4 L1164.0 645.1 M1164.0 648.0 L1181.1 650.8 L1192.5 655.1 L1249.5 660.8 L1278.0 673.6 L1288.0 685.0 L1312.2 690.7 L1323.6 699.3 L1333.6 708.4 L1357.8 708.4 L1373.5 708.4 L1392.0 709.2 L1400.6 716.4 L1407.7 724.9 L1409.7 739.2 L1406.3 746.3 M1381.2 732.0 L1406.3 732.0 M1381.2 732.0 L1373.5 733.5 L1370.6 742.0 L1370.6 753.4 L1363.5 767.7 L1355.0 790.5 L1343.6 797.6 M985.0 1035.1 L980.7 1045.1 L980.7 1056.5 L977.9 1066.5 M1343.6 800.0 L1337.9 808.6 L1326.5 818.5 L1312.2 827.1 L1303.7 837.1 L1295.1 854.2 L1286.6 868.4 L1275.2 885.5 L1273.7 899.8 L1260.9 919.7 L1252.4 942.5 L1253.8 953.9 L1260.9 968.2 L1252.4 985.3 L1258.1 993.8 L1269.5 1005.2 L1306.5 1022.3 L1349.3 1065.1 L1355.0 1099.3 L1366.4 1119.2 L1373.5 1147.7 M705.7 1505.9 L728.5 1491.7 L748.5 1480.3 L771.3 1471.7 L808.3 1464.6 L828.3 1451.8 L851.1 1437.5 L868.2 1423.3 L885.3 1413.3 L928.0 1408.4 L942.3 1399.9 L979.3 1399.0 L1013.5 1394.8 L1020.6 1393.3 L1034.9 1391.9 M1079.1 1372.0 L1099.0 1366.3 L1127.5 1360.6 L1156.0 1353.4 L1164.0 1352.9 M1016.4 1393.3 L1014.9 1403.3 M1243.8 1317.8 L1260.9 1317.8 L1275.2 1309.3 L1292.3 1297.9 L1315.1 1295.0 L1335.0 1287.9 L1363.5 1286.5 L1392.0 1283.6 L1394.9 1279.3 L1412.0 1277.9 L1423.4 1280.8 M1164.0 1353.4 L1178.3 1354.9 L1198.2 1372.0 M1198.2 1337.8 L1206.8 1349.2 M1437.6 1309.3 L1449.0 1323.5 L1459.0 1346.3 L1451.9 1357.7 L1451.9 1372.0 M1497.5 1458.9 L1503.2 1446.1" fill="none" stroke="#ff9900" stroke-width="3.6" stroke-linejoin="round" stroke-linecap="round"/>
<path d="M705.7 29.9 L717.1 27.1 L728.5 20.0 L739.9 20.0 L749.9 28.5 L757.0 37.1 L771.3 42.8 L785.5 54.2 L796.9 67.0 L808.3 72.7 L822.6 79.8 L842.5 88.4 L853.9 82.7 L863.9 77.0 L876.7 82.7 L888.1 94.1 L899.5 106.9 L908.1 119.7 L916.6 136.8 L925.2 158.2 M814.0 0.0 L809.7 11.4 L799.8 25.7 L791.2 37.1 L786.9 54.2 L796.9 67.0 M925.2 158.2 L936.6 136.8 L942.3 101.2 L956.5 96.9 L970.8 89.8 L985.0 82.7 L1013.5 81.2 L1042.0 77.0 L1056.3 71.3 L1067.7 57.0 L1076.2 39.9 L1084.8 22.8 L1096.2 8.6 L1104.7 0.0 M925.2 158.2 L905.2 158.2 L899.5 162.5 L900.9 171.0 L896.7 188.1 L885.3 213.8 L871.0 242.3 L853.9 273.6 L834.0 302.1 L819.7 324.9 L814.0 344.9 L794.1 359.1 L774.1 373.4 L757.0 387.6 L734.2 399.9 M925.2 158.2 L913.8 171.0 L912.3 182.4 L919.5 193.8 L925.2 205.2 L928.0 225.2 L925.2 242.3 L922.3 259.4 L919.5 267.9 L905.2 280.7 L896.7 287.9 L892.4 296.4 M925.2 248.0 L936.6 252.2 L950.8 255.1 L959.4 263.6 L962.2 280.7 L966.5 280.7 M919.5 193.8 L928.0 196.7 L945.1 210.9 L962.2 225.2 L979.3 239.4 L993.6 253.7 L1002.1 262.2 L1005.0 277.9 M936.6 162.5 L948.0 172.4 L962.2 186.7 L976.5 202.4 L985.0 219.5 L993.6 236.6 L1002.1 245.1 L1010.7 250.8 L1016.4 266.5 L1022.1 280.7 M936.6 159.6 L985.0 162.5 L990.7 173.9 L993.6 185.3 L1013.5 189.5 L1036.3 196.7 L1042.0 216.6 L1046.3 235.1 L1036.3 248.0 L1027.8 253.7 L1033.5 262.2 M1036.3 196.7 L1070.5 193.8 L1093.3 191.0 L1130.4 191.5 L1136.1 183.8 L1140.6 177.0 L1150.3 171.0 L1164.0 166.7 M1133.2 191.5 L1133.2 205.2 L1121.8 222.3 L1107.6 242.3 L1096.2 262.2 L1081.9 277.9 M1022.1 280.7 L1005.0 277.9 L1003.5 296.4 L1000.7 313.5 L997.8 330.6 L993.6 350.6 L987.9 376.2 L973.6 399.9 M1064.8 293.6 L1079.1 299.3 M1164.0 166.7 L1192.5 164.7 L1235.3 163.9 L1263.8 166.7 L1286.6 168.2 L1298.0 156.8 L1303.7 149.6 L1323.6 145.4 L1334.2 141.7 L1346.4 128.3 L1363.5 114.0 L1392.0 94.1 L1420.5 71.3 L1434.8 48.5 L1443.3 34.2 L1460.4 11.4 L1477.5 0.0 M1628.0 96.9 L1614.3 119.7 L1600.1 148.2 L1588.7 182.4 L1583.0 216.6 L1585.8 242.3 L1583.0 262.2 L1571.6 279.3 L1560.2 296.4 L1561.6 302.1 M970.8 400.0 L965.1 422.8 L956.5 451.3 L948.0 482.7 L939.4 514.0 L933.7 536.8 L933.7 562.5 L948.0 585.3 L962.2 610.9 L973.6 636.6 L985.0 656.5 L986.4 666.5 L985.0 685.0 L982.2 690.7 L987.9 713.5 L996.4 733.5 L1006.4 753.4 L1010.7 767.7 L1013.5 799.9 M700.0 457.0 L734.2 461.3 L768.4 471.3 L791.2 485.5 L814.0 494.1 L845.4 495.5 L871.0 506.9 L899.5 519.7 L916.6 525.4 L928.0 534.0 M705.7 424.2 L721.4 420.0 L725.7 411.4 L737.1 400.0 M985.0 676.5 L967.9 677.9 L956.5 686.4 L945.1 685.0 L910.9 687.9 L873.9 686.4 L863.9 692.1 L861.0 713.5 L848.2 722.1 L831.1 742.0 L814.0 762.0 L794.1 776.2 L779.8 790.5 L771.3 799.9 M996.4 650.8 L1007.8 650.2 L1016.4 653.7 L1040.0 652.5 L1052.8 644.8 L1071.9 645.4 L1079.9 648.8 L1091.0 647.1 L1110.4 632.0 L1129.5 630.3 L1143.8 624.6 L1156.0 626.6 L1164.0 630.9 M986.4 666.5 L996.4 650.8 M1053.4 680.7 L1062.0 687.9 L1070.5 705.0 L1081.9 722.1 L1099.0 736.3 L1104.7 747.7 L1104.7 757.7 M1164.0 630.9 L1178.3 639.4 L1198.2 643.7 L1235.3 645.7 L1266.6 647.4 L1292.3 645.7 L1315.1 649.4 L1332.2 645.1 L1363.5 644.5 L1374.9 649.4 L1423.4 647.4 L1433.3 636.6 L1449.0 628.0 L1466.1 616.6 L1483.2 603.8 L1500.3 588.1 L1520.3 568.2 L1526.0 559.6 L1527.4 548.2 L1526.0 534.0 M1302.2 645.7 L1306.5 636.6 L1317.9 628.0 L1326.5 616.6 L1346.4 599.5 L1363.5 589.5 L1374.9 573.9 L1392.0 556.8 L1400.6 539.7 L1407.7 524.0 L1420.5 519.7 L1434.8 516.9 L1446.2 505.5 L1469.0 496.9 L1483.2 508.3 L1494.6 516.9 L1500.3 528.3 L1508.9 538.2 L1523.1 539.7 M1527.4 548.2 L1563.0 548.8 L1591.5 547.6 L1602.9 543.9 L1608.6 539.1 L1617.2 539.1 L1622.9 542.5 L1625.1 553.9 L1628.0 556.8 M1433.3 636.6 L1440.5 648.0 L1449.0 656.5 L1463.3 663.6 L1480.4 666.5 L1497.5 665.1 L1511.7 657.9 L1526.0 642.3 L1543.1 636.6 L1563.0 629.4 L1574.4 628.0 L1585.8 618.0 L1602.9 609.5 L1620.0 600.9 L1628.0 600.4 M1423.4 647.4 L1417.7 665.1 L1414.8 693.6 L1412.0 707.8 L1403.4 716.4 L1407.7 724.9 L1409.1 742.0 M1266.6 647.4 L1275.2 652.2 L1282.3 662.2 L1306.5 676.5 L1335.0 690.7 L1357.8 700.7 L1373.5 709.2 L1377.8 722.1 L1381.2 732.0 M1006.4 800.0 L1006.4 854.2 L1007.8 862.7 L1019.2 879.8 L1027.8 902.6 L1034.9 925.4 L1030.6 942.5 L1033.5 953.9 L1034.9 982.4 L1034.9 1025.2 L1033.5 1039.4 L1027.8 1056.5 L1026.3 1085.0 L1027.8 1113.5 L1030.6 1136.3 L1036.3 1164.8 L1042.0 1193.3 L1043.4 1199.9 M705.7 949.6 L722.8 950.2 L737.1 956.8 L762.7 968.2 L796.9 985.3 L828.3 999.5 L839.7 1004.6 L896.7 1004.6 L908.1 1009.5 L922.3 1025.2 L933.7 1035.1 L945.1 1038.8 L970.8 1037.4 L993.6 1033.7 L1005.0 1026.6 L1022.1 1016.6 L1030.6 1022.3 M1034.9 1039.4 L1044.9 1048.0 L1067.7 1065.1 L1087.6 1065.1 L1110.4 1075.0 L1133.2 1087.9 L1156.0 1090.7 L1164.0 1096.4 M1034.9 1029.4 L1079.1 1028.0 L1113.3 1022.3 L1138.9 1020.0 L1164.0 1020.9 M967.9 840.8 L936.6 839.9 L919.5 849.9 L896.7 851.3 L865.3 852.7 L851.1 861.3 L831.1 875.5 L825.4 888.4 L818.3 896.9 L775.5 915.4 L761.3 931.1 L751.3 948.2 L737.1 956.8 M1006.4 839.9 L1036.3 839.9 L1047.7 847.0 L1062.0 849.0 L1081.9 855.6 L1099.0 862.7 L1107.6 869.8 L1130.4 877.0 L1153.2 888.4 L1164.0 889.8 M705.7 816.2 L742.8 819.4 L765.6 817.1 L771.3 811.4 M839.7 1004.6 L845.4 1028.0 L849.6 1056.5 L851.1 1076.5 L852.5 1113.5 L853.9 1156.3 L845.4 1179.1 L842.5 1199.9 M705.7 1102.1 L722.8 1127.8 L734.2 1133.5 L744.2 1146.3 L771.3 1157.7 L785.5 1170.5 L791.2 1181.9 L794.1 1199.9 M1164.0 889.8 L1178.3 891.2 L1209.6 881.2 L1249.5 878.4 L1272.3 874.1 L1283.7 868.4 L1292.3 861.3 M1249.5 981.0 L1206.8 993.8 L1198.2 999.5 L1189.7 1010.9 L1172.6 1019.5 L1164.0 1022.3 M1269.5 1005.2 L1278.0 1010.9 L1280.9 1045.1 L1273.7 1062.2 L1272.3 1079.3 L1266.6 1096.4 L1255.2 1116.4 L1263.8 1136.3 L1272.3 1159.1 L1280.9 1176.2 L1289.4 1187.6 L1293.7 1199.9 M1164.0 1096.4 L1184.0 1103.5 L1198.2 1105.0 L1255.2 1116.4 M1270.9 1147.7 L1300.8 1140.6 L1315.1 1133.5 L1323.6 1133.5 L1342.1 1146.3 L1377.8 1154.8 L1392.0 1176.2 L1406.3 1194.7 L1406.3 1199.9 M722.8 1124.0 L737.1 1138.3 L744.2 1146.8 L771.3 1158.2 L785.5 1172.5 L792.6 1186.7 L794.1 1203.8 L799.8 1212.4 L819.7 1220.9 L842.5 1228.0 L851.1 1229.5 M853.9 1124.0 L853.9 1158.2 L845.4 1178.2 L842.5 1203.8 L843.9 1229.5 L843.9 1243.7 L851.1 1250.8 L882.4 1259.4 L928.0 1270.8 L948.0 1269.4 L973.6 1277.9 L999.3 1283.6 L1012.1 1286.5 M1029.2 1124.0 L1032.0 1149.7 L1037.7 1172.5 L1044.9 1198.1 L1050.6 1223.8 L1054.8 1239.4 L1042.0 1249.4 L1027.8 1259.4 L1016.4 1266.5 L1012.1 1277.9 L1013.5 1289.3 L1020.6 1300.7 L1023.5 1323.5 L1027.8 1349.2 L1032.0 1372.0 L1034.9 1380.5 M1054.8 1243.7 L1070.5 1252.3 L1093.3 1269.4 L1110.4 1292.2 L1127.5 1309.3 L1144.6 1323.5 L1164.0 1337.8 M1034.9 1380.5 L1024.9 1386.2 L1020.6 1397.6 L1007.8 1410.4 L1002.1 1417.6 L1002.1 1434.7 L1007.8 1446.1 L1022.1 1457.5 L1024.9 1463.2 L1019.2 1480.3 L1005.0 1500.2 L993.6 1520.2 L992.1 1523.9 M1042.0 1393.3 L1050.6 1404.7 L1070.5 1410.4 L1096.2 1409.0 L1107.6 1414.7 L1113.3 1434.7 L1116.1 1466.0 L1114.7 1491.7 L1124.7 1505.9 L1104.7 1514.5 M1079.1 1394.8 L1099.0 1406.2 L1110.4 1417.6 L1127.5 1437.5 L1141.8 1454.6 L1164.0 1457.5 M1124.7 1505.9 L1144.6 1494.5 L1164.0 1474.6 M1164.0 1337.8 L1181.1 1360.6 L1201.1 1374.8 L1221.0 1363.4 L1241.0 1374.8 L1266.6 1376.2 L1280.9 1389.1 L1295.1 1403.3 L1323.6 1409.0 L1349.3 1411.9 L1366.4 1409.0 L1374.9 1404.7 L1386.3 1394.8 L1397.7 1383.4 L1409.1 1374.8 M1221.0 1363.4 L1232.4 1380.5 L1252.4 1411.9 L1263.8 1417.6 L1278.0 1431.8 L1295.1 1448.9 L1323.6 1454.6 L1340.7 1466.0 L1352.1 1483.1 L1360.7 1505.9 L1366.4 1523.9 M1223.9 1360.6 L1238.1 1346.3 L1260.9 1340.6 L1278.0 1337.8 L1295.1 1334.9 L1303.7 1343.5 L1312.2 1354.9 L1315.1 1366.3 L1335.0 1377.7 L1357.8 1389.1 L1374.9 1404.7 L1392.0 1417.6 L1409.1 1434.7 L1423.4 1451.8 L1431.9 1460.3 L1449.0 1457.5 L1466.1 1453.2 L1477.5 1456.0 L1500.3 1461.7 L1517.4 1466.0 L1523.1 1477.4 L1530.2 1493.1 L1520.3 1505.9 L1506.0 1517.3 L1497.5 1523.9 M1295.1 1334.9 L1312.2 1349.2 L1329.3 1363.4 L1346.4 1374.8 L1369.2 1387.6 L1392.0 1397.6 L1409.1 1409.0 L1426.2 1426.1 L1440.5 1437.5 L1454.7 1451.8 L1466.1 1453.2 M1466.1 1409.0 L1474.7 1414.7 L1497.5 1416.1 L1503.2 1426.1 M1260.9 1124.0 L1269.5 1149.7 L1278.0 1169.6 L1289.4 1183.9 L1298.0 1218.1 L1303.7 1243.7 L1309.4 1266.5 L1309.4 1289.3 L1305.1 1297.9 L1305.1 1312.1 L1317.9 1323.5 L1329.3 1332.1 L1330.7 1342.0 L1323.6 1344.0 L1303.7 1343.5 M1270.9 1148.2 L1300.8 1141.1 L1315.1 1134.0 L1323.6 1134.0 L1342.1 1145.4 L1377.8 1153.9 L1392.0 1175.3 L1406.3 1193.8 L1404.8 1218.1 L1403.4 1232.3 L1412.0 1249.4 L1421.9 1267.9 L1426.2 1289.3 L1437.6 1309.3 L1449.0 1329.2 L1460.4 1349.2 M1164.0 1337.8 L1172.6 1349.2 L1185.4 1366.3 L1195.4 1372.0 L1203.9 1374.8 L1192.5 1386.2 L1184.0 1406.2 L1184.0 1420.4 L1175.4 1437.5 L1166.9 1454.6 L1168.3 1471.7 L1164.0 1480.3 L1181.1 1491.7 L1201.1 1497.4 L1212.5 1514.5 L1223.9 1523.9 M1223.9 1517.3 L1249.5 1515.9 L1278.0 1520.2 L1300.8 1523.9 M1426.2 1523.9 L1437.6 1517.3 L1451.9 1503.1 L1460.4 1498.8 L1474.7 1500.2 L1491.8 1510.2 L1506.0 1508.8 L1520.3 1505.9 M1349.3 1523.9 L1363.5 1521.6" fill="none" stroke="#ff3300" stroke-width="3.6" stroke-linejoin="round" stroke-linecap="round"/>
<defs>
<linearGradient id="mg" x1="0" y1="0" x2="0" y2="1"><stop offset="0" stop-color="#d43e2f"/><stop offset="0.6" stop-color="#d03b2d"/><stop offset="1" stop-color="#c0382a"/></linearGradient>
<filter id="soft" x="-20%" y="-20%" width="140%" height="140%"><feGaussianBlur stdDeviation="0.7"/></filter>
</defs>
<circle cx="927" cy="158" r="9.85" fill="#6b6b6b"/><circle cx="927" cy="158" r="7.2" fill="#ff3b00"/>
<circle cx="1334" cy="142" r="9.85" fill="#6b6b6b"/><circle cx="1334" cy="142" r="7.2" fill="#ff3b00"/>
<circle cx="1022" cy="280" r="9.85" fill="#6b6b6b"/><circle cx="1022" cy="280" r="7.2" fill="#ff3b00"/>
<circle cx="1562" cy="314" r="9.85" fill="#6b6b6b"/><circle cx="1562" cy="314" r="7.2" fill="#ff8000"/>
<circle cx="910.4" cy="547" r="9.85" fill="#6b6b6b"/><circle cx="910.4" cy="547" r="7.2" fill="#ff8000"/>
<circle cx="1532" cy="531" r="7.6" fill="#6b6b6b"/><circle cx="1532" cy="531" r="4.4" fill="#ffc000"/>
<circle cx="996.5" cy="666.6" r="9.85" fill="#6b6b6b"/><circle cx="996.5" cy="666.6" r="7.2" fill="#ff3b00"/>
<circle cx="1401" cy="759" r="9.85" fill="#6b6b6b"/><circle cx="1401" cy="759" r="7.2" fill="#ff3b00"/>
<circle cx="772" cy="805.3" r="7.6" fill="#6b6b6b"/><circle cx="772" cy="805.3" r="4.4" fill="#ffc000"/>
<circle cx="978" cy="837" r="9.85" fill="#6b6b6b"/><circle cx="978" cy="837" r="7.2" fill="#ff8000"/>
<circle cx="1260" cy="979" r="9.85" fill="#6b6b6b"/><circle cx="1260" cy="979" r="7.2" fill="#ff8000"/>
<circle cx="1022.5" cy="1031" r="9.85" fill="#6b6b6b"/><circle cx="1022.5" cy="1031" r="7.2" fill="#ff3b00"/>
<circle cx="859" cy="1230" r="9.85" fill="#6b6b6b"/><circle cx="859" cy="1230" r="7.2" fill="#ff8000"/>
<circle cx="1467" cy="1354" r="7.6" fill="#6b6b6b"/><circle cx="1467" cy="1354" r="4.4" fill="#ffc000"/>
<circle cx="1217" cy="1353.6" r="9.85" fill="#6b6b6b"/><circle cx="1217" cy="1353.6" r="7.2" fill="#ff8000"/>
<circle cx="1036" cy="1381" r="9.85" fill="#6b6b6b"/><circle cx="1036" cy="1381" r="7.2" fill="#ff8000"/>
<circle cx="1540" cy="1471" r="9.85" fill="#6b6b6b"/><circle cx="1540" cy="1471" r="7.2" fill="#ff3b00"/>
<circle cx="1102" cy="1519" r="7.6" fill="#6b6b6b"/><circle cx="1102" cy="1519" r="4.4" fill="#ffc000"/>
<text x="940" y="161" font-family="Liberation Sans, Noto Sans CJK SC, sans-serif" font-size="21.5" font-weight="bold" fill="none" stroke="#fff" stroke-opacity=".45" stroke-width="7.5" stroke-linejoin="round" dominant-baseline="central">北京</text>
<text x="940" y="161" font-family="Liberation Sans, Noto Sans CJK SC, sans-serif" font-size="21.5" font-weight="bold" fill="#0b1330" stroke="#fff" stroke-opacity=".8" stroke-width="3.6" stroke-linejoin="round" paint-order="stroke" dominant-baseline="central">北京</text>
<text x="1347" y="145.5" font-family="Liberation Sans, Noto Sans CJK SC, sans-serif" font-size="21.5" font-weight="bold" fill="none" stroke="#fff" stroke-opacity=".45" stroke-width="7.5" stroke-linejoin="round" dominant-baseline="central">山海关</text>
<text x="1347" y="145.5" font-family="Liberation Sans, Noto Sans CJK SC, sans-serif" font-size="21.5" font-weight="bold" fill="#0b1330" stroke="#fff" stroke-opacity=".8" stroke-width="3.6" stroke-linejoin="round" paint-order="stroke" dominant-baseline="central">山海关</text>
<text x="1034" y="283.5" font-family="Liberation Sans, Noto Sans CJK SC, sans-serif" font-size="21.5" font-weight="bold" fill="none" stroke="#fff" stroke-opacity=".45" stroke-width="7.5" stroke-linejoin="round" dominant-baseline="central">天津</text>
<text x="1034" y="283.5" font-family="Liberation Sans, Noto Sans CJK SC, sans-serif" font-size="21.5" font-weight="bold" fill="#0b1330" stroke="#fff" stroke-opacity=".8" stroke-width="3.6" stroke-linejoin="round" paint-order="stroke" dominant-baseline="central">天津</text>
<text x="1575" y="318" font-family="Liberation Sans, Noto Sans CJK SC, sans-serif" font-size="21.5" font-weight="bold" fill="none" stroke="#fff" stroke-opacity=".45" stroke-width="7.5" stroke-linejoin="round" dominant-baseline="central">大连</text>
<text x="1575" y="318" font-family="Liberation Sans, Noto Sans CJK SC, sans-serif" font-size="21.5" font-weight="bold" fill="#0a5cf5" stroke="#fff" stroke-opacity=".8" stroke-width="3.6" stroke-linejoin="round" paint-order="stroke" dominant-baseline="central">大连</text>
<text x="704" y="462" font-family="Liberation Sans, Noto Sans CJK SC, sans-serif" font-size="21.5" font-weight="bold" fill="none" stroke="#fff" stroke-opacity=".45" stroke-width="7.5" stroke-linejoin="round" dominant-baseline="central">石家庄</text>
<text x="704" y="462" font-family="Liberation Sans, Noto Sans CJK SC, sans-serif" font-size="21.5" font-weight="bold" fill="#0b1330" stroke="#fff" stroke-opacity=".8" stroke-width="3.6" stroke-linejoin="round" paint-order="stroke" dominant-baseline="central">石家庄</text>
<text x="923" y="550.5" font-family="Liberation Sans, Noto Sans CJK SC, sans-serif" font-size="21.5" font-weight="bold" fill="none" stroke="#fff" stroke-opacity=".45" stroke-width="7.5" stroke-linejoin="round" dominant-baseline="central">德州</text>
<text x="923" y="550.5" font-family="Liberation Sans, Noto Sans CJK SC, sans-serif" font-size="21.5" font-weight="bold" fill="#0a5cf5" stroke="#fff" stroke-opacity=".8" stroke-width="3.6" stroke-linejoin="round" paint-order="stroke" dominant-baseline="central">德州</text>
<text x="1545" y="533.5" font-family="Liberation Sans, Noto Sans CJK SC, sans-serif" font-size="20.5" font-weight="normal" fill="none" stroke="#fff" stroke-opacity=".45" stroke-width="7.5" stroke-linejoin="round" dominant-baseline="central">烟台</text>
<text x="1545" y="533.5" font-family="Liberation Sans, Noto Sans CJK SC, sans-serif" font-size="20.5" font-weight="normal" fill="#0a60ff" stroke="#fff" stroke-opacity=".8" stroke-width="3.6" stroke-linejoin="round" paint-order="stroke" dominant-baseline="central">烟台</text>
<text x="1009" y="670" font-family="Liberation Sans, Noto Sans CJK SC, sans-serif" font-size="21.5" font-weight="bold" fill="none" stroke="#fff" stroke-opacity=".45" stroke-width="7.5" stroke-linejoin="round" dominant-baseline="central">济南</text>
<text x="1009" y="670" font-family="Liberation Sans, Noto Sans CJK SC, sans-serif" font-size="21.5" font-weight="bold" fill="#0b1330" stroke="#fff" stroke-opacity=".8" stroke-width="3.6" stroke-linejoin="round" paint-order="stroke" dominant-baseline="central">济南</text>
<text x="702" y="681" font-family="Liberation Sans, Noto Sans CJK SC, sans-serif" font-size="21.5" font-weight="bold" fill="none" stroke="#fff" stroke-opacity=".45" stroke-width="7.5" stroke-linejoin="round" dominant-baseline="central">邯郸</text>
<text x="702" y="681" font-family="Liberation Sans, Noto Sans CJK SC, sans-serif" font-size="21.5" font-weight="bold" fill="#0a5cf5" stroke="#fff" stroke-opacity=".8" stroke-width="3.6" stroke-linejoin="round" paint-order="stroke" dominant-baseline="central">邯郸</text>
<text x="1414" y="763" font-family="Liberation Sans, Noto Sans CJK SC, sans-serif" font-size="21.5" font-weight="bold" fill="none" stroke="#fff" stroke-opacity=".45" stroke-width="7.5" stroke-linejoin="round" dominant-baseline="central">青岛</text>
<text x="1414" y="763" font-family="Liberation Sans, Noto Sans CJK SC, sans-serif" font-size="21.5" font-weight="bold" fill="#0b1330" stroke="#fff" stroke-opacity=".8" stroke-width="3.6" stroke-linejoin="round" paint-order="stroke" dominant-baseline="central">青岛</text>
<text x="784" y="808.5" font-family="Liberation Sans, Noto Sans CJK SC, sans-serif" font-size="20.5" font-weight="normal" fill="none" stroke="#fff" stroke-opacity=".45" stroke-width="7.5" stroke-linejoin="round" dominant-baseline="central">濮阳东</text>
<text x="784" y="808.5" font-family="Liberation Sans, Noto Sans CJK SC, sans-serif" font-size="20.5" font-weight="normal" fill="#0a60ff" stroke="#fff" stroke-opacity=".8" stroke-width="3.6" stroke-linejoin="round" paint-order="stroke" dominant-baseline="central">濮阳东</text>
<text x="680.3" y="817" font-family="Liberation Sans, Noto Sans CJK SC, sans-serif" font-size="20.5" font-weight="normal" fill="none" stroke="#fff" stroke-opacity=".45" stroke-width="7.5" stroke-linejoin="round" dominant-baseline="central">鹤壁东</text>
<text x="680.3" y="817" font-family="Liberation Sans, Noto Sans CJK SC, sans-serif" font-size="20.5" font-weight="normal" fill="#0a60ff" stroke="#fff" stroke-opacity=".8" stroke-width="3.6" stroke-linejoin="round" paint-order="stroke" dominant-baseline="central">鹤壁东</text>
<text x="991" y="841" font-family="Liberation Sans, Noto Sans CJK SC, sans-serif" font-size="21.5" font-weight="bold" fill="none" stroke="#fff" stroke-opacity=".45" stroke-width="7.5" stroke-linejoin="round" dominant-baseline="central">兖州</text>
<text x="991" y="841" font-family="Liberation Sans, Noto Sans CJK SC, sans-serif" font-size="21.5" font-weight="bold" fill="#0a5cf5" stroke="#fff" stroke-opacity=".8" stroke-width="3.6" stroke-linejoin="round" paint-order="stroke" dominant-baseline="central">兖州</text>
<text x="1273" y="983.5" font-family="Liberation Sans, Noto Sans CJK SC, sans-serif" font-size="21.5" font-weight="bold" fill="none" stroke="#fff" stroke-opacity=".45" stroke-width="7.5" stroke-linejoin="round" dominant-baseline="central">连云港</text>
<text x="1273" y="983.5" font-family="Liberation Sans, Noto Sans CJK SC, sans-serif" font-size="21.5" font-weight="bold" fill="#0a5cf5" stroke="#fff" stroke-opacity=".8" stroke-width="3.6" stroke-linejoin="round" paint-order="stroke" dominant-baseline="central">连云港</text>
<text x="1035" y="1034" font-family="Liberation Sans, Noto Sans CJK SC, sans-serif" font-size="21.5" font-weight="bold" fill="none" stroke="#fff" stroke-opacity=".45" stroke-width="7.5" stroke-linejoin="round" dominant-baseline="central">徐州</text>
<text x="1035" y="1034" font-family="Liberation Sans, Noto Sans CJK SC, sans-serif" font-size="21.5" font-weight="bold" fill="#0b1330" stroke="#fff" stroke-opacity=".8" stroke-width="3.6" stroke-linejoin="round" paint-order="stroke" dominant-baseline="central">徐州</text>
<text x="872" y="1234" font-family="Liberation Sans, Noto Sans CJK SC, sans-serif" font-size="21.5" font-weight="bold" fill="none" stroke="#fff" stroke-opacity=".45" stroke-width="7.5" stroke-linejoin="round" dominant-baseline="central">阜阳</text>
<text x="872" y="1234" font-family="Liberation Sans, Noto Sans CJK SC, sans-serif" font-size="21.5" font-weight="bold" fill="#0a5cf5" stroke="#fff" stroke-opacity=".8" stroke-width="3.6" stroke-linejoin="round" paint-order="stroke" dominant-baseline="central">阜阳</text>
<text x="1475" y="1336" font-family="Liberation Sans, Noto Sans CJK SC, sans-serif" font-size="20.5" font-weight="normal" fill="none" stroke="#fff" stroke-opacity=".45" stroke-width="7.5" stroke-linejoin="round" dominant-baseline="central">南通</text>
<text x="1475" y="1336" font-family="Liberation Sans, Noto Sans CJK SC, sans-serif" font-size="20.5" font-weight="normal" fill="#0a60ff" stroke="#fff" stroke-opacity=".8" stroke-width="3.6" stroke-linejoin="round" paint-order="stroke" dominant-baseline="central">南通</text>
<text x="1230" y="1356" font-family="Liberation Sans, Noto Sans CJK SC, sans-serif" font-size="21.5" font-weight="bold" fill="none" stroke="#fff" stroke-opacity=".45" stroke-width="7.5" stroke-linejoin="round" dominant-baseline="central">南京</text>
<text x="1230" y="1356" font-family="Liberation Sans, Noto Sans CJK SC, sans-serif" font-size="21.5" font-weight="bold" fill="#0a5cf5" stroke="#fff" stroke-opacity=".8" stroke-width="3.6" stroke-linejoin="round" paint-order="stroke" dominant-baseline="central">南京</text>
<text x="1048" y="1385" font-family="Liberation Sans, Noto Sans CJK SC, sans-serif" font-size="21.5" font-weight="bold" fill="none" stroke="#fff" stroke-opacity=".45" stroke-width="7.5" stroke-linejoin="round" dominant-baseline="central">合肥</text>
<text x="1048" y="1385" font-family="Liberation Sans, Noto Sans CJK SC, sans-serif" font-size="21.5" font-weight="bold" fill="#0a5cf5" stroke="#fff" stroke-opacity=".8" stroke-width="3.6" stroke-linejoin="round" paint-order="stroke" dominant-baseline="central">合肥</text>
<text x="1553" y="1475" font-family="Liberation Sans, Noto Sans CJK SC, sans-serif" font-size="21.5" font-weight="bold" fill="none" stroke="#fff" stroke-opacity=".45" stroke-width="7.5" stroke-linejoin="round" dominant-baseline="central">上海</text>
<text x="1553" y="1475" font-family="Liberation Sans, Noto Sans CJK SC, sans-serif" font-size="21.5" font-weight="bold" fill="#0b1330" stroke="#fff" stroke-opacity=".8" stroke-width="3.6" stroke-linejoin="round" paint-order="stroke" dominant-baseline="central">上海</text>
<text x="1114" y="1523" font-family="Liberation Sans, Noto Sans CJK SC, sans-serif" font-size="21.5" font-weight="bold" fill="none" stroke="#fff" stroke-opacity=".45" stroke-width="7.5" stroke-linejoin="round" dominant-baseline="central">铜陵</text>
<text x="1114" y="1523" font-family="Liberation Sans, Noto Sans CJK SC, sans-serif" font-size="21.5" font-weight="bold" fill="#0a5cf5" stroke="#fff" stroke-opacity=".8" stroke-width="3.6" stroke-linejoin="round" paint-order="stroke" dominant-baseline="central">铜陵</text>
<text x="1342" y="301" font-family="Liberation Sans, Noto Sans CJK SC, sans-serif" font-size="23" fill="#4a80b8" dominant-baseline="central" letter-spacing="1">渤海</text>
<path d="M1524.70 1472.80 L1504.76 1445.95 A26.3 26.3 0 1 1 1547.04 1445.95 L1527.10 1472.80 Q1525.90 1474.80 1524.70 1472.80 Z" fill="#c8392b" opacity=".55" filter="url(#soft)" transform="translate(0,0.3)"/>
<path d="M1524.70 1472.80 L1504.76 1445.95 A26.3 26.3 0 1 1 1547.04 1445.95 L1527.10 1472.80 Q1525.90 1474.80 1524.70 1472.80 Z" fill="url(#mg)"/>
<text x="1525.9" y="1443.7" text-anchor="middle" font-family="Liberation Sans, sans-serif" font-weight="bold" font-size="24" fill="#fff">1</text>
<path d="M1441.00 1440.30 L1421.06 1413.45 A26.3 26.3 0 1 1 1463.34 1413.45 L1443.40 1440.30 Q1442.20 1442.30 1441.00 1440.30 Z" fill="#c8392b" opacity=".55" filter="url(#soft)" transform="translate(0,0.3)"/>
<path d="M1441.00 1440.30 L1421.06 1413.45 A26.3 26.3 0 1 1 1463.34 1413.45 L1443.40 1440.30 Q1442.20 1442.30 1441.00 1440.30 Z" fill="url(#mg)"/>
<text x="1442.2" y="1411.2" text-anchor="middle" font-family="Liberation Sans, sans-serif" font-weight="bold" font-size="24" fill="#fff">2</text>
<path d="M1419.50 1415.60 L1399.56 1388.75 A26.3 26.3 0 1 1 1441.84 1388.75 L1421.90 1415.60 Q1420.70 1417.60 1419.50 1415.60 Z" fill="#c8392b" opacity=".55" filter="url(#soft)" transform="translate(0,0.3)"/>
<path d="M1419.50 1415.60 L1399.56 1388.75 A26.3 26.3 0 1 1 1441.84 1388.75 L1421.90 1415.60 Q1420.70 1417.60 1419.50 1415.60 Z" fill="url(#mg)"/>
<text x="1420.7" y="1386.5" text-anchor="middle" font-family="Liberation Sans, sans-serif" font-weight="bold" font-size="24" fill="#fff">3</text>
<path d="M1215.80 1360.80 L1195.86 1333.95 A26.3 26.3 0 1 1 1238.14 1333.95 L1218.20 1360.80 Q1217.00 1362.80 1215.80 1360.80 Z" fill="#c8392b" opacity=".55" filter="url(#soft)" transform="translate(0,0.3)"/>
<path d="M1215.80 1360.80 L1195.86 1333.95 A26.3 26.3 0 1 1 1238.14 1333.95 L1218.20 1360.80 Q1217.00 1362.80 1215.80 1360.80 Z" fill="url(#mg)"/>
<text x="1217.0" y="1331.7" text-anchor="middle" font-family="Liberation Sans, sans-serif" font-weight="bold" font-size="24" fill="#fff">4</text>
<path d="M1099.30 1273.10 L1079.36 1246.25 A26.3 26.3 0 1 1 1121.64 1246.25 L1101.70 1273.10 Q1100.50 1275.10 1099.30 1273.10 Z" fill="#c8392b" opacity=".55" filter="url(#soft)" transform="translate(0,0.3)"/>
<path d="M1099.30 1273.10 L1079.36 1246.25 A26.3 26.3 0 1 1 1121.64 1246.25 L1101.70 1273.10 Q1100.50 1275.10 1099.30 1273.10 Z" fill="url(#mg)"/>
<text x="1100.5" y="1244.0" text-anchor="middle" font-family="Liberation Sans, sans-serif" font-weight="bold" font-size="24" fill="#fff">5</text>
<path d="M1034.30 1025.10 L1014.36 998.25 A26.3 26.3 0 1 1 1056.64 998.25 L1036.70 1025.10 Q1035.50 1027.10 1034.30 1025.10 Z" fill="#c8392b" opacity=".55" filter="url(#soft)" transform="translate(0,0.3)"/>
<path d="M1034.30 1025.10 L1014.36 998.25 A26.3 26.3 0 1 1 1056.64 998.25 L1036.70 1025.10 Q1035.50 1027.10 1034.30 1025.10 Z" fill="url(#mg)"/>
<text x="1035.5" y="996.0" text-anchor="middle" font-family="Liberation Sans, sans-serif" font-weight="bold" font-size="24" fill="#fff">6</text>
<path d="M1005.40 830.60 L985.46 803.75 A26.3 26.3 0 1 1 1027.74 803.75 L1007.80 830.60 Q1006.60 832.60 1005.40 830.60 Z" fill="#c8392b" opacity=".55" filter="url(#soft)" transform="translate(0,0.3)"/>
<path d="M1005.40 830.60 L985.46 803.75 A26.3 26.3 0 1 1 1027.74 803.75 L1007.80 830.60 Q1006.60 832.60 1005.40 830.60 Z" fill="url(#mg)"/>
<text x="1006.6" y="801.5" text-anchor="middle" font-family="Liberation Sans, sans-serif" font-weight="bold" font-size="24" fill="#fff">7</text>
<path d="M984.00 661.30 L964.06 634.45 A26.3 26.3 0 1 1 1006.34 634.45 L986.40 661.30 Q985.20 663.30 984.00 661.30 Z" fill="#c8392b" opacity=".55" filter="url(#soft)" transform="translate(0,0.3)"/>
<path d="M984.00 661.30 L964.06 634.45 A26.3 26.3 0 1 1 1006.34 634.45 L986.40 661.30 Q985.20 663.30 984.00 661.30 Z" fill="url(#mg)"/>
<text x="985.2" y="632.2" text-anchor="middle" font-family="Liberation Sans, sans-serif" font-weight="bold" font-size="24" fill="#fff">8</text>
<path d="M931.80 545.70 L911.86 518.85 A26.3 26.3 0 1 1 954.14 518.85 L934.20 545.70 Q933.00 547.70 931.80 545.70 Z" fill="#c8392b" opacity=".55" filter="url(#soft)" transform="translate(0,0.3)"/>
<path d="M931.80 545.70 L911.86 518.85 A26.3 26.3 0 1 1 954.14 518.85 L934.20 545.70 Q933.00 547.70 931.80 545.70 Z" fill="url(#mg)"/>
<text x="933.0" y="516.6" text-anchor="middle" font-family="Liberation Sans, sans-serif" font-weight="bold" font-size="24" fill="#fff">9</text>
<path d="M967.80 405.60 L947.86 378.75 A26.3 26.3 0 1 1 990.14 378.75 L970.20 405.60 Q969.00 407.60 967.80 405.60 Z" fill="#c8392b" opacity=".55" filter="url(#soft)" transform="translate(0,0.3)"/>
<path d="M967.80 405.60 L947.86 378.75 A26.3 26.3 0 1 1 990.14 378.75 L970.20 405.60 Q969.00 407.60 967.80 405.60 Z" fill="url(#mg)"/>
<text x="969.0" y="376.5" text-anchor="middle" font-family="Liberation Sans, sans-serif" font-weight="bold" font-size="24" fill="#fff">10</text>
<path d="M921.50 157.60 L901.56 130.75 A26.3 26.3 0 1 1 943.84 130.75 L923.90 157.60 Q922.70 159.60 921.50 157.60 Z" fill="#c8392b" opacity=".55" filter="url(#soft)" transform="translate(0,0.3)"/>
<path d="M921.50 157.60 L901.56 130.75 A26.3 26.3 0 1 1 943.84 130.75 L923.90 157.60 Q922.70 159.60 921.50 157.60 Z" fill="url(#mg)"/>
<text x="922.7" y="128.5" text-anchor="middle" font-family="Liberation Sans, sans-serif" font-weight="bold" font-size="24" fill="#fff">11</text>
</svg>
</div>
<div id="panel">
  <div id="hdr"><span class="t">路线信息</span><span class="h">(隐藏)</span></div>
  <div id="title">G124次列车, 上海虹桥至北京南</div>
  <div class="ln" style="top:113px"></div>
  <div class="ln" style="top:183px"></div>
  <div class="ln" style="top:234px"></div>
  <div class="vl"></div>
  <div class="c" style="left:3.5px;top:133.5px">列车类型</div>
  <div class="badge">高速动车</div>
  <div class="c" style="left:3.5px;top:193px">总运行时间</div>
  <div class="c" style="left:220px;top:193px">5小时59分钟</div>
  <table>
    <colgroup><col style="width:69.5px"><col style="width:171.5px"><col style="width:99px"><col style="width:99px"><col style="width:100px"><col></colgroup>
    <thead><tr><th>#</th><th>车站</th><th>到达</th><th>发车</th><th>停车</th><th>运行时间</th></tr></thead>
    <tbody>
    <tr><td>1</td><td><a>上海虹桥</a></td><td>-</td><td>10:44</td><td>-</td><td>00:00</td></tr>
    <tr><td>2</td><td><a>苏州北</a></td><td>11:07</td><td>11:09</td><td>2分</td><td>00:23</td></tr>
    <tr><td>3</td><td><a>无锡东</a></td><td>11:19</td><td>11:24</td><td>5分</td><td>00:35</td></tr>
    <tr><td>4</td><td><a>南京南</a></td><td>12:07</td><td>12:09</td><td>2分</td><td>01:23</td></tr>
    <tr><td>5</td><td><a>定远</a></td><td>12:40</td><td>12:42</td><td>2分</td><td>01:56</td></tr>
    <tr><td>6</td><td><a>徐州东</a></td><td>13:32</td><td>13:34</td><td>2分</td><td>02:48</td></tr>
    <tr><td>7</td><td><a>曲阜东</a></td><td>14:10</td><td>14:12</td><td>2分</td><td>03:26</td></tr>
    <tr><td>8</td><td><a>济南西</a></td><td>14:44</td><td>14:46</td><td>2分</td><td>04:00</td></tr>
    <tr><td>9</td><td><a>德州东</a></td><td>15:11</td><td>15:19</td><td>8分</td><td>04:27</td></tr>
    <tr><td>10</td><td><a>沧州西</a></td><td>15:45</td><td>15:50</td><td>5分</td><td>05:01</td></tr>
    <tr><td>11</td><td><a>北京南</a></td><td>16:43</td><td>-</td><td>-</td><td>05:59</td></tr>
    </tbody>
  </table>
  <div id="foot"><a>关于数据与免责声明</a></div>
</div>
</body>
</html>
